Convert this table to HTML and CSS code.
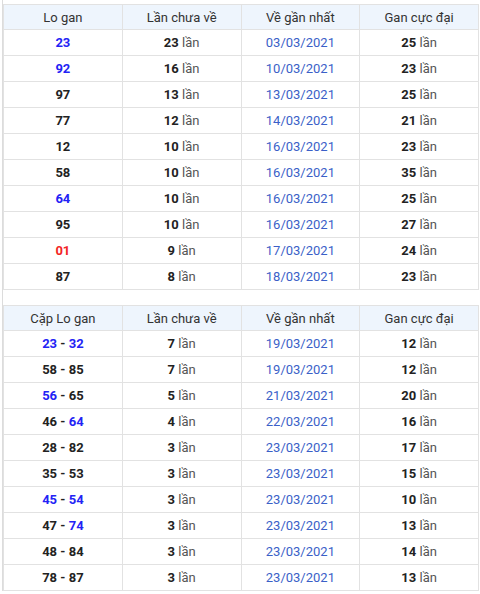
FILE: index.html
```html
<!DOCTYPE html>
<html lang="vi">
<head>
<meta charset="utf-8">
<title>Lô gan</title>
<link rel="stylesheet" href="styles.css">
</head>
<body>
<div class="wrap">
<table class="tbl">
<thead><tr><th>Lo gan</th><th>Lần chưa về</th><th>Về gần nhất</th><th>Gan cực đại</th></tr></thead>
<tbody>
<tr><td><b class="b">23</b></td><td><b>23</b> <span class="u">lần</span></td><td class="d">03/03/2021</td><td><b>25</b> <span class="u">lần</span></td></tr>
<tr><td><b class="b">92</b></td><td><b>16</b> <span class="u">lần</span></td><td class="d">10/03/2021</td><td><b>23</b> <span class="u">lần</span></td></tr>
<tr><td><b>97</b></td><td><b>13</b> <span class="u">lần</span></td><td class="d">13/03/2021</td><td><b>25</b> <span class="u">lần</span></td></tr>
<tr><td><b>77</b></td><td><b>12</b> <span class="u">lần</span></td><td class="d">14/03/2021</td><td><b>21</b> <span class="u">lần</span></td></tr>
<tr><td><b>12</b></td><td><b>10</b> <span class="u">lần</span></td><td class="d">16/03/2021</td><td><b>23</b> <span class="u">lần</span></td></tr>
<tr><td><b>58</b></td><td><b>10</b> <span class="u">lần</span></td><td class="d">16/03/2021</td><td><b>35</b> <span class="u">lần</span></td></tr>
<tr><td><b class="b">64</b></td><td><b>10</b> <span class="u">lần</span></td><td class="d">16/03/2021</td><td><b>25</b> <span class="u">lần</span></td></tr>
<tr><td><b>95</b></td><td><b>10</b> <span class="u">lần</span></td><td class="d">16/03/2021</td><td><b>27</b> <span class="u">lần</span></td></tr>
<tr><td><b class="r">01</b></td><td><b>9</b> <span class="u">lần</span></td><td class="d">17/03/2021</td><td><b>24</b> <span class="u">lần</span></td></tr>
<tr><td><b>87</b></td><td><b>8</b> <span class="u">lần</span></td><td class="d">18/03/2021</td><td><b>23</b> <span class="u">lần</span></td></tr>
</tbody>
</table>
<div class="gap"></div>
<table class="tbl">
<thead><tr><th>Cặp Lo gan</th><th>Lần chưa về</th><th>Về gần nhất</th><th>Gan cực đại</th></tr></thead>
<tbody>
<tr><td><b class="b">23</b> <b>-</b> <b class="b">32</b></td><td><b>7</b> <span class="u">lần</span></td><td class="d">19/03/2021</td><td><b>12</b> <span class="u">lần</span></td></tr>
<tr><td><b>58</b> <b>-</b> <b>85</b></td><td><b>7</b> <span class="u">lần</span></td><td class="d">19/03/2021</td><td><b>12</b> <span class="u">lần</span></td></tr>
<tr><td><b class="b">56</b> <b>-</b> <b>65</b></td><td><b>5</b> <span class="u">lần</span></td><td class="d">21/03/2021</td><td><b>20</b> <span class="u">lần</span></td></tr>
<tr><td><b>46</b> <b>-</b> <b class="b">64</b></td><td><b>4</b> <span class="u">lần</span></td><td class="d">22/03/2021</td><td><b>16</b> <span class="u">lần</span></td></tr>
<tr><td><b>28</b> <b>-</b> <b>82</b></td><td><b>3</b> <span class="u">lần</span></td><td class="d">23/03/2021</td><td><b>17</b> <span class="u">lần</span></td></tr>
<tr><td><b>35</b> <b>-</b> <b>53</b></td><td><b>3</b> <span class="u">lần</span></td><td class="d">23/03/2021</td><td><b>15</b> <span class="u">lần</span></td></tr>
<tr><td><b class="b">45</b> <b>-</b> <b class="b">54</b></td><td><b>3</b> <span class="u">lần</span></td><td class="d">23/03/2021</td><td><b>10</b> <span class="u">lần</span></td></tr>
<tr><td><b>47</b> <b>-</b> <b class="b">74</b></td><td><b>3</b> <span class="u">lần</span></td><td class="d">23/03/2021</td><td><b>13</b> <span class="u">lần</span></td></tr>
<tr><td><b>48</b> <b>-</b> <b>84</b></td><td><b>3</b> <span class="u">lần</span></td><td class="d">23/03/2021</td><td><b>14</b> <span class="u">lần</span></td></tr>
<tr><td><b>78</b> <b>-</b> <b>87</b></td><td><b>3</b> <span class="u">lần</span></td><td class="d">23/03/2021</td><td><b>13</b> <span class="u">lần</span></td></tr>
</tbody>
</table>
</div>
</body>
</html>
```
FILE: styles.css
```css
html, body {
  margin: 0;
  padding: 0;
  background: #fff;
}
body {
  font-family: Roboto, "Liberation Sans", Arial, sans-serif;
  font-size: 13px;
  color: #222;
}
.wrap {
  margin-left: 2px;
  border-left: 1px solid #dcdcdc;
  padding-top: 4px;
  width: 476px;
}
.tbl {
  width: 476px;
  border-collapse: collapse;
  table-layout: fixed;
}
.tbl th, .tbl td {
  border: 1px solid #e2e2e2;
  text-align: center;
  padding: 0;
}
.tbl th {
  background: #eef5fd;
  font-weight: normal;
  color: #333;
  height: 24px;
}
.tbl td {
  height: 25px;
}
.tbl b {
  font-weight: bold;
  color: #222;
}
.tbl b.b {
  color: #2323f5;
}
.tbl b.r {
  color: #f32424;
}
.u {
  color: #555;
}
.d {
  color: #3b5fc8;
}
.gap {
  height: 15px;
}
```
